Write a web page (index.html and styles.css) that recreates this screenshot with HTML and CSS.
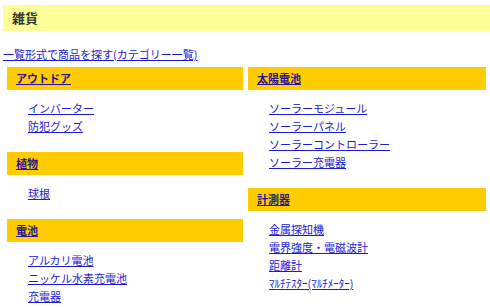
FILE: index.html
```html
<!DOCTYPE html>
<html lang="ja">
<head>
    <meta charset="UTF-8">
    <title>雑貨</title>
    <link rel="stylesheet" href="styles.css">
</head>
<body>
    <div class="page-title">雑貨</div>

    <div class="list-link">
        <a href="#">一覧形式で商品を探す(カテゴリー一覧)</a>
    </div>

    <div class="categories">
        <div class="column">
            <div class="cat-head"><a href="#">アウトドア</a></div>
            <ul class="cat-list">
                <li><a href="#">インバーター</a></li>
                <li><a href="#">防犯グッズ</a></li>
            </ul>

            <div class="cat-head"><a href="#">植物</a></div>
            <ul class="cat-list">
                <li><a href="#">球根</a></li>
            </ul>

            <div class="cat-head"><a href="#">電池</a></div>
            <ul class="cat-list">
                <li><a href="#">アルカリ電池</a></li>
                <li><a href="#">ニッケル水素充電池</a></li>
                <li><a href="#">充電器</a></li>
            </ul>
        </div>

        <div class="column">
            <div class="cat-head"><a href="#">太陽電池</a></div>
            <ul class="cat-list">
                <li><a href="#">ソーラーモジュール</a></li>
                <li><a href="#">ソーラーパネル</a></li>
                <li><a href="#">ソーラーコントローラー</a></li>
                <li><a href="#">ソーラー充電器</a></li>
            </ul>

            <div class="cat-head"><a href="#">計測器</a></div>
            <ul class="cat-list">
                <li><a href="#">金属探知機</a></li>
                <li><a href="#">電界強度・電磁波計</a></li>
                <li><a href="#">距離計</a></li>
                <li><a href="#">ﾏﾙﾁﾃｽﾀｰ(ﾏﾙﾁﾒｰﾀｰ)</a></li>
            </ul>
        </div>
    </div>
</body>
</html>
```

FILE: styles.css
```css
body {
    margin: 0;
    padding: 5px 0 0 0;
    font-family: 'Noto Sans CJK JP', sans-serif;
    font-size: 11px;
    background-color: #ffffff;
    overflow: hidden;
}
a {
    color: #1a1ad6;
    text-decoration: underline;
}
.page-title {
    margin-left: 3px;
    height: 26px;
    line-height: 26px;
    padding-left: 9px;
    background-color: #ffff99;
    color: #333;
    font-size: 13px;
    font-weight: bold;
}
.list-link {
    margin: 13px 0 0 3px;
    line-height: 20px;
}
.categories {
    display: grid;
    grid-template-columns: 236px 238px;
    column-gap: 5px;
    margin: 3px 0 0 7px;
}
.cat-head {
    height: 23px;
    line-height: 23px;
    padding-left: 9px;
    background-color: #ffcc00;
    font-weight: bold;
}
.cat-head a {
    color: #2a1499;
}
.cat-list {
    list-style: none;
    margin: 9px 0 17px 0;
    padding-left: 21px;
}
.cat-list li {
    line-height: 18px;
}
```
